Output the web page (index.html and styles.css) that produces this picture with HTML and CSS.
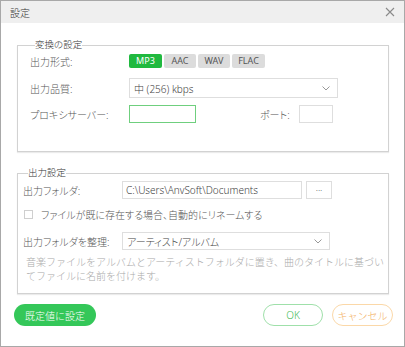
FILE: index.html
```html
<!DOCTYPE html>
<html lang="ja">
<head>
  <meta charset="UTF-8">
  <meta name="viewport" content="width=device-width, initial-scale=1.0">
  <title>設定</title>
  <link rel="stylesheet" href="styles.css">
</head>
<body>
  <div class="window">
    <div class="titlebar">
      <span class="title">設定</span>
      <svg class="close" width="10" height="10" viewBox="0 0 10 10">
        <path d="M1 1L9 9M9 1L1 9" stroke="#8a8a8a" stroke-width="1.1" fill="none"/>
      </svg>
    </div>

    <fieldset class="group conv">
      <legend>変換の設定</legend>
      <div class="row row-format">
        <label class="lbl">出力形式:</label>
        <div class="formats">
          <button type="button" class="fmt active">MP3</button>
          <button type="button" class="fmt">AAC</button>
          <button type="button" class="fmt">WAV</button>
          <button type="button" class="fmt">FLAC</button>
        </div>
      </div>
      <div class="row row-quality">
        <label class="lbl">出力品質:</label>
        <div class="select quality">
          <span>中 (256) kbps</span>
          <svg class="chev" width="8" height="5" viewBox="0 0 8 5"><path d="M0.5 0.5L4 4L7.5 0.5" stroke="#999" fill="none"/></svg>
        </div>
      </div>
      <div class="row row-proxy">
        <label class="lbl">プロキシサーバー:</label>
        <input type="text" class="proxy">
        <label class="port-lbl">ポート:</label>
        <input type="text" class="port">
      </div>
    </fieldset>

    <fieldset class="group out">
      <legend>出力設定</legend>
      <div class="row row-folder">
        <label class="lbl">出力フォルダ:</label>
        <input type="text" class="folder" value="C:\Users\AnvSoft\Documents" readonly>
        <button type="button" class="browse">...</button>
      </div>
      <label class="row row-check">
        <span class="box"></span>
        <span>ファイルが既に存在する場合、自動的にリネームする</span>
      </label>
      <div class="row row-organize">
        <label class="lbl">出力フォルダを整理:</label>
        <div class="select organize">
          <span>アーティスト/アルバム</span>
          <svg class="chev" width="8" height="5" viewBox="0 0 8 5"><path d="M0.5 0.5L4 4L7.5 0.5" stroke="#999" fill="none"/></svg>
        </div>
      </div>
      <p class="desc">音楽ファイルをアルバムとアーティストフォルダに置き、曲のタイトルに基づいてファイルに名前を付けます。</p>
    </fieldset>

    <div class="footer">
      <button type="button" class="btn reset">既定値に設定</button>
      <div class="actions">
        <button type="button" class="btn ok">OK</button>
        <button type="button" class="btn cancel">キャンセル</button>
      </div>
    </div>
  </div>
</body>
</html>
```

FILE: styles.css
```css
* {
  box-sizing: border-box;
}

body {
  margin: 0;
  font-family: "Noto Sans", "Noto Sans CJK JP", sans-serif;
  font-size: 10px;
  font-weight: 300;
  color: #555;
  background: #fff;
}

.window {
  width: 405px;
  height: 347px;
  border: 1px solid #a8a8a8;
  background: #fff;
}

.titlebar {
  height: 22px;
  background: #efefef;
  display: flex;
  align-items: center;
  justify-content: space-between;
  padding: 0 9px 0 9px;
}

.title {
  font-size: 10px;
  color: #333;
}

.close {
  margin-top: -1px;
}

.group {
  margin: 16px 15px 0 16px;
  width: 372px;
  border: 1px solid #d2d2d2;
  box-shadow: 0 1px 1px rgba(0, 0, 0, 0.08);
  padding: 0;
  min-width: 0;
}

.group legend {
  margin-left: 5px;
  padding: 0;
  line-height: 12px;
  font-size: 9.5px;
  color: #333;
  font-feature-settings: "palt";
}

.row {
  display: flex;
  align-items: center;
}

.lbl {
  width: 99px;
  flex: none;
  font-feature-settings: "palt";
}

/* 変換の設定 */
.conv {
  padding: 3px 0 28px 12px;
}

.row-format {
  height: 14px;
}

.formats {
  display: flex;
  gap: 2px;
}

.fmt {
  height: 14px;
  border: none;
  border-radius: 2px;
  background: #dcdcdc;
  color: #555;
  font-family: inherit;
  font-size: 9px;
  padding: 0;
  width: 32px;
  line-height: 14px;
}

.fmt:last-child {
  width: 33px;
}

.fmt.active {
  width: 33px;
  background: #20b93f;
  color: #fff;
}

.row-quality {
  height: 20px;
  margin-top: 10px;
}

.select {
  height: 100%;
  border: 1px solid #dedede;
  display: flex;
  align-items: center;
  justify-content: space-between;
  padding: 0 7px 0 4px;
  color: #444;
  font-feature-settings: "palt";
}

.quality {
  width: 209px;
}

.row-proxy {
  height: 18px;
  margin-top: 7px;
}

input[type="text"] {
  height: 18px;
  margin: 0;
  border: 1px solid #dedede;
  font-family: inherit;
  font-size: 10px;
  font-weight: 300;
  color: #444;
  padding: 0 3px;
  outline: none;
}

.proxy {
  width: 67px;
  border-color: #6fcf7e !important;
}

.port-lbl {
  margin-left: 64px;
  width: 39px;
  font-feature-settings: "palt";
}

.port {
  width: 34px;
}

/* 出力設定 */
.out {
  margin-top: 15px;
  padding: 2px 0 10px 5px;
}

.row-folder {
  height: 18px;
}

.folder {
  width: 180px;
}

.browse {
  width: 26px;
  height: 18px;
  margin-left: 4px;
  border: 1px solid #dedede;
  background: #fff;
  color: #555;
  font-size: 8px;
  padding: 0 0 4px;
}

.row-check {
  height: 16px;
  margin-top: 7px;
  padding-left: 1px;
  font-feature-settings: "palt";
}

.box {
  width: 9px;
  height: 9px;
  border: 1px solid #cfcfcf;
  margin-right: 8px;
  flex: none;
}

.row-organize {
  height: 18px;
  margin-top: 10px;
}

.organize {
  width: 208px;
}

.desc {
  margin: 5px 0 0 3px;
  width: 360px;
  line-height: 14px;
  color: #aaa;
}

/* ボタン */
.footer {
  display: flex;
  justify-content: space-between;
  padding: 10px 11px 0 13px;
}

.actions {
  display: flex;
  gap: 9px;
}

.btn {
  height: 22px;
  border-radius: 11px;
  font-family: inherit;
  font-size: 10px;
  font-weight: 300;
  padding: 0;
  background: #fff;
}

.reset {
  width: 82px;
  background: #34c759;
  border: none;
  color: #fff;
}

.ok {
  width: 60px;
  border: 1px solid #9fe0aa;
  color: #44bb55;
}

.cancel {
  width: 61px;
  border: 1px solid #fbd8a8;
  color: #f3b062;
}
```
